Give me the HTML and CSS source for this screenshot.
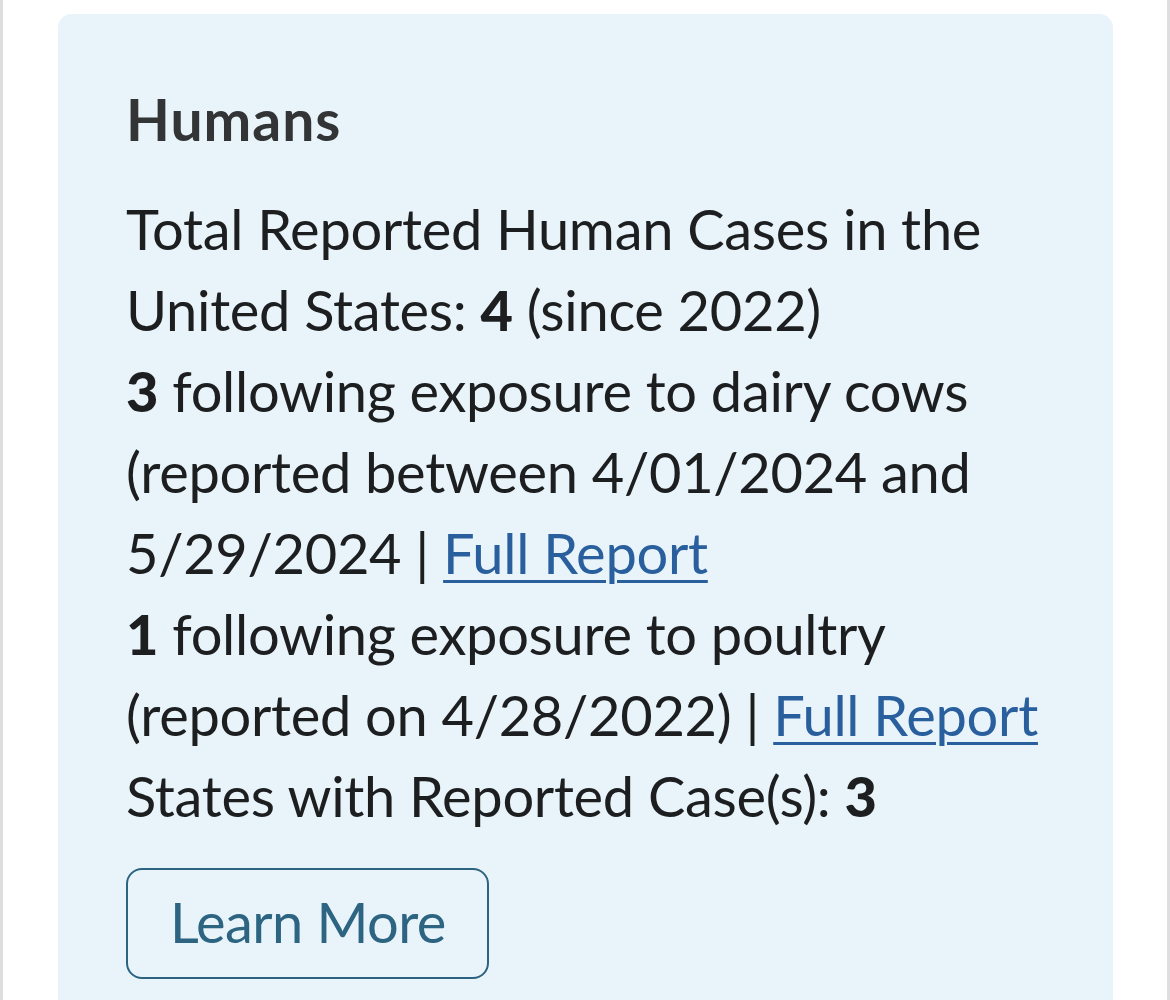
FILE: index.html
```html
<!DOCTYPE html>
<html>
<head>
<meta charset="utf-8">
<link rel="stylesheet" href="styles.css">
</head>
<body>
<div class="frame">
  <section class="card">
    <h2 class="title">Humans</h2>
    <div class="body">
      <p class="line">Total Reported Human Cases in the United States: <b>4</b> (since 2022)</p>
      <p class="line"><b>3</b> following exposure to dairy cows (reported between 4/01/2024 and 5/29/2024 | <a href="#" class="link">Full Report</a></p>
      <p class="line"><b>1</b> following exposure to poultry (reported on 4/28/2022) | <a href="#" class="link">Full Report</a></p>
      <p class="line">States with Reported Case(s): <b>3</b></p>
    </div>
    <a href="#" class="btn">Learn More</a>
  </section>
</div>
</body>
</html>
```
FILE: styles.css
```css
html, body {
  margin: 0;
  padding: 0;
  background: #ffffff;
}
body {
  font-family: Lato, "Noto Sans", sans-serif;
  color: #1d1e20;
}
.frame {
  border-left: 3px solid #dedee0;
  border-right: 3px solid #dedee0;
  padding: 14px 54px 0 55px;
  min-height: 1000px;
  box-sizing: border-box;
}
.card {
  background: #e8f4fa;
  border-radius: 14px;
  padding: 72px 54px 60px 68px;
  min-height: 1100px;
}
.title {
  margin: 0;
  font-size: 57px;
  line-height: 67px;
  font-weight: 700;
  letter-spacing: 1px;
  color: #323436;
}
.body {
  margin-top: 35px;
  font-size: 56px;
  line-height: 81px;
  letter-spacing: -0.3px;
}
.line {
  margin: 0;
}
.line b {
  font-weight: 900;
}
.link {
  color: #2a5f9e;
  text-decoration: underline;
  text-decoration-thickness: 3px;
  text-underline-offset: 6px;
}
.btn {
  display: inline-block;
  margin-top: 32px;
  border: 2.5px solid #2c6380;
  border-radius: 16px;
  padding: 18px 41px 22px 42px;
  font-size: 56px;
  line-height: 67px;
  letter-spacing: -0.6px;
  color: #2c6482;
  text-decoration: none;
}
```
